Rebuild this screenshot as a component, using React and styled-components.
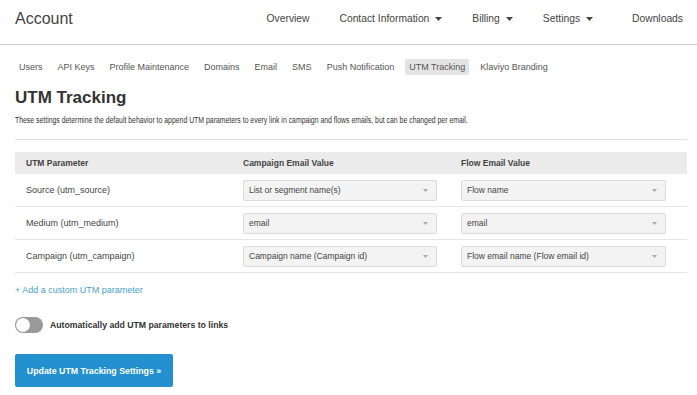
import React from "react";
import styled, { createGlobalStyle } from "styled-components";

const GlobalStyle = createGlobalStyle`
  body {
    margin: 0;
    background: #fff;
    font-family: "Liberation Sans", Arial, sans-serif;
    color: #333;
  }
`;

const navItems = [
  { label: "Overview" },
  { label: "Contact Information", caret: true },
  { label: "Billing", caret: true },
  { label: "Settings", caret: true },
  { label: "Downloads" },
];

const tabs = [
  "Users",
  "API Keys",
  "Profile Maintenance",
  "Domains",
  "Email",
  "SMS",
  "Push Notification",
  "UTM Tracking",
  "Klaviyo Branding",
];

const rows = [
  { name: "Source (utm_source)", campaign: "List or segment name(s)", flow: "Flow name" },
  { name: "Medium (utm_medium)", campaign: "email", flow: "email" },
  { name: "Campaign (utm_campaign)", campaign: "Campaign name (Campaign id)", flow: "Flow email name (Flow email id)" },
];

const Caret = () => (
  <svg width="7" height="4" viewBox="0 0 7 4">
    <path d="M0 0h7L3.5 4z" fill="currentColor" />
  </svg>
);

export default function App() {
  return (
    <Page>
      <GlobalStyle />
      <Header>
        <Brand>Account</Brand>
        <Nav>
          {navItems.map((n) => (
            <NavItem key={n.label}>
              {n.label}
              {n.caret && <Caret />}
            </NavItem>
          ))}
        </Nav>
      </Header>
      <Main>
        <Tabs>
          {tabs.map((t) => (
            <Tab key={t} active={t === "UTM Tracking"}>
              {t}
            </Tab>
          ))}
        </Tabs>
        <Title>UTM Tracking</Title>
        <Description>
          These settings determine the default behavior to append UTM parameters to every link in campaign and flows emails, but can be changed per email.
        </Description>
        <Rule />
        <Table>
          <HeadRow>
            <HeadCell>UTM Parameter</HeadCell>
            <HeadCell>Campaign Email Value</HeadCell>
            <HeadCell>Flow Email Value</HeadCell>
          </HeadRow>
          {rows.map((r) => (
            <Row key={r.name}>
              <Cell>{r.name}</Cell>
              <Cell>
                <Select w={194}>
                  <span>{r.campaign}</span>
                  <SelectCaret><Caret /></SelectCaret>
                </Select>
              </Cell>
              <Cell>
                <Select w={205}>
                  <span>{r.flow}</span>
                  <SelectCaret><Caret /></SelectCaret>
                </Select>
              </Cell>
            </Row>
          ))}
        </Table>
        <AddLink>+ Add a custom UTM parameter</AddLink>
        <ToggleRow>
          <Toggle>
            <Knob />
          </Toggle>
          <ToggleLabel>Automatically add UTM parameters to links</ToggleLabel>
        </ToggleRow>
        <Button>Update UTM Tracking Settings »</Button>
      </Main>
    </Page>
  );
}

const Page = styled.div`
  width: 697px;
  min-height: 395px;
`;

const Header = styled.header`
  height: 44px;
  display: flex;
  align-items: center;
  justify-content: space-between;
  padding: 0 14px 0 15px;
  border-bottom: 1px solid #c9c9c9;
`;

const Brand = styled.div`
  font-size: 16px;
  color: #444;
  padding-bottom: 7px;
`;

const Nav = styled.nav`
  display: flex;
  align-items: center;
  padding-bottom: 7px;
`;

const NavItem = styled.div`
  display: flex;
  align-items: center;
  gap: 6px;
  font-size: 10.3px;
  color: #444;
  margin-left: 30px;
  &:last-child {
    margin-left: 39px;
  }
`;

const Main = styled.main`
  padding: 0 10px 0 15px;
`;

const Tabs = styled.div`
  display: flex;
  align-items: center;
  gap: 7px;
  margin-top: 14px;
  height: 16px;
`;

const Tab = styled.div`
  font-size: 9px;
  color: #555;
  padding: 3px 4px;
  border-radius: 2px;
  background: ${(p) => (p.active ? "#e4e4e4" : "transparent")};
`;

const Title = styled.h1`
  margin: 13px 0 0;
  font-size: 17px;
  font-weight: bold;
  color: #333;
`;

const Description = styled.p`
  margin: 7px 0 0;
  font-size: 8.5px;
  color: #333;
  white-space: nowrap;
  transform: scaleX(0.81);
  transform-origin: left center;
`;

const Rule = styled.hr`
  border: none;
  border-top: 1px solid #e2e2e2;
  margin: 14px 0 12px;
`;

const Table = styled.div`
  display: grid;
  grid-template-columns: 217px 218px 1fr;
  width: 672px;
`;

const HeadRow = styled.div`
  display: contents;
`;

const HeadCell = styled.div`
  background: #ebebeb;
  height: 22px;
  display: flex;
  align-items: center;
  padding-left: 11px;
  font-size: 8.5px;
  font-weight: bold;
  color: #444;
`;

const Row = styled.div`
  display: contents;
`;

const Cell = styled.div`
  height: 32px;
  display: flex;
  align-items: center;
  padding-left: 11px;
  border-bottom: 1px solid #e6e6e6;
  font-size: 9px;
  color: #444;
`;

const Select = styled.div`
  width: ${(p) => p.w}px;
  height: 21px;
  box-sizing: border-box;
  display: flex;
  align-items: center;
  justify-content: space-between;
  padding: 0 8px 0 5px;
  background: #f3f3f3;
  border: 1px solid #dcdcdc;
  border-radius: 2px;
  font-size: 8.5px;
  color: #444;
`;

const SelectCaret = styled.span`
  color: #aaa;
  display: flex;
  svg {
    width: 5px;
    height: 3px;
  }
`;

const AddLink = styled.a`
  display: block;
  margin-top: 12px;
  font-size: 9px;
  color: #4a9fc8;
`;

const ToggleRow = styled.div`
  display: flex;
  align-items: center;
  gap: 7px;
  margin-top: 22px;
`;

const Toggle = styled.div`
  width: 28px;
  height: 16px;
  border-radius: 8px;
  background: #9a9a9a;
  position: relative;
`;

const Knob = styled.div`
  position: absolute;
  top: 1px;
  left: 1px;
  width: 14px;
  height: 14px;
  border-radius: 50%;
  background: #fff;
  box-shadow: 0 0 1px rgba(0, 0, 0, 0.3);
`;

const ToggleLabel = styled.span`
  font-size: 8.7px;
  font-weight: bold;
  color: #333;
`;

const Button = styled.button`
  display: block;
  margin-top: 21px;
  width: 158px;
  height: 33px;
  border: none;
  border-radius: 2px;
  background: #2390cf;
  color: #fff;
  font-family: "Liberation Sans", Arial, sans-serif;
  font-size: 8.8px;
  font-weight: bold;
  cursor: pointer;
`;
